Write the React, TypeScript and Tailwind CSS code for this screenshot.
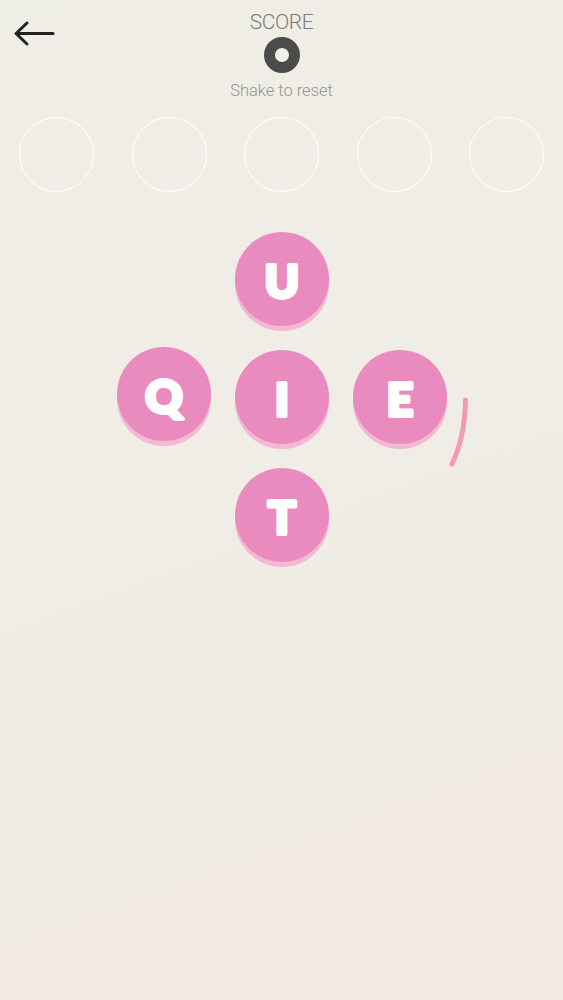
import React from "react";

function Tile({ letter, className = "" }: { letter: string; className?: string }) {
  return (
    <div className="flex h-[118px] w-[118px] items-center justify-center">
      <div
        className={`flex h-[94px] w-[94px] items-center justify-center rounded-full bg-[#e98bbf] shadow-[0_5px_0_#f3b9d3] ${className}`}
      >
        <svg width="94" height="94" viewBox="0 0 94 94">
          <text
            x="47"
            y="66"
            textAnchor="middle"
            fill="#ffffff"
            stroke="#ffffff"
            strokeWidth="4"
            strokeLinejoin="round"
            strokeLinecap="round"
            className="font-['Lato','Open_Sans',sans-serif] text-[46px] font-black"
          >
            {letter}
          </text>
        </svg>
      </div>
    </div>
  );
}

function Empty() {
  return <div className="h-[118px] w-[118px]" />;
}

export default function App() {
  return (
    <div className="min-h-[1000px] w-full bg-[linear-gradient(160deg,#efeee5_0%,#efede5_45%,#f2e9e4_100%)] font-['Roboto','Liberation_Sans',sans-serif]">
      <div className="relative flex flex-col items-center pt-[10px]">
        <button className="absolute left-[13px] top-[20px] text-[#222]">
          <svg width="42" height="28" viewBox="0 0 42 28" fill="none">
            <path d="M40 13.5H4" stroke="#222" strokeWidth="3" strokeLinecap="round" />
            <path d="M14 3L3 13.5L14 24" stroke="#222" strokeWidth="3" strokeLinecap="round" strokeLinejoin="round" />
          </svg>
        </button>
        <div className="text-[21px] font-light leading-[24px] tracking-[-0.4px] text-[#7a7a7a]">SCORE</div>
        <div className="mt-[3px] h-[36px] w-[36px] rounded-full border-[11.5px] border-[#4b4b4b] bg-[#f1efe8]" />
        <div className="mt-[8px] text-[16.5px] font-light leading-[20px] text-[#959595]">Shake to reset</div>
      </div>

      <div className="mt-[16px] flex justify-center gap-[37.5px]">
        {[0, 1, 2, 3, 4].map((i) => (
          <div key={i} className="h-[75px] w-[75px] rounded-full border border-white" />
        ))}
      </div>

      <div className="mt-[28px] flex justify-center">
        <div className="relative grid w-[354px] grid-cols-3">
          <Empty />
          <Tile letter="U" />
          <Empty />
          <Tile letter="Q" className="-translate-y-[3px]" />
          <Tile letter="I" />
          <Tile letter="E" />
          <Empty />
          <Tile letter="T" />
          <Empty />
          <svg
            className="absolute left-[340px] top-[172px]"
            width="30"
            height="82"
            viewBox="0 0 30 82"
            fill="none"
          >
            <path d="M20.5 8 Q20 45 7 72" stroke="#f29bb4" strokeWidth="5" strokeLinecap="round" />
          </svg>
        </div>
      </div>
    </div>
  );
}
